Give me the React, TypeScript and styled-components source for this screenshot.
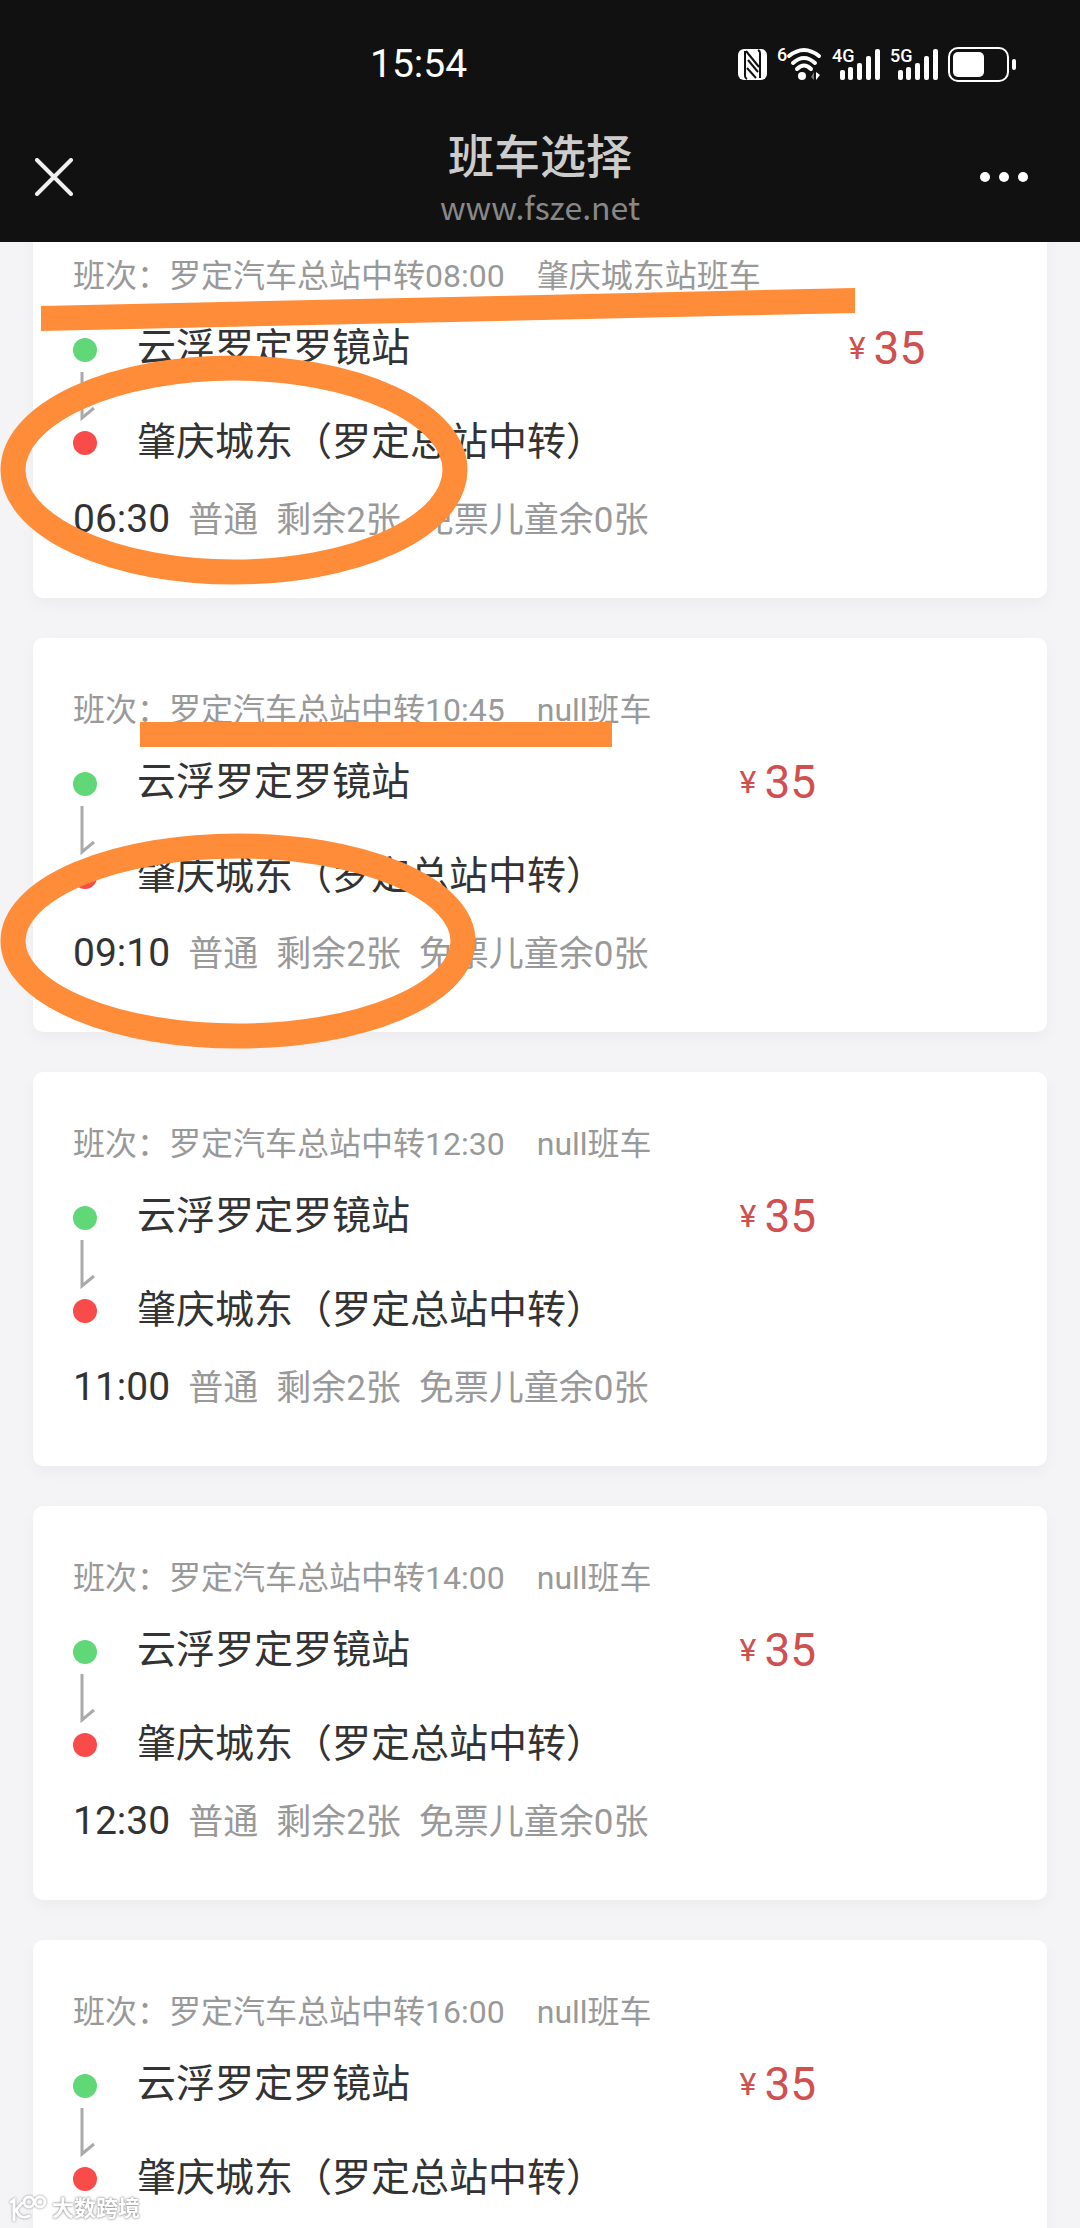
import React from "react";
import styled, { createGlobalStyle } from "styled-components";

const GlobalStyle = createGlobalStyle`
  * { box-sizing: border-box; }
  body {
    margin: 0;
    background: #f4f3f6;
    font-family: Roboto, "Noto Sans CJK SC", sans-serif;
    color: #333;
  }
`;

const Page = styled.div`
  display: flex;
  flex-direction: column;
  height: 100vh;
  overflow: hidden;
`;

const Header = styled.header`
  flex: none;
  background: #111;
  color: #fff;
`;

const StatusBar = styled.div`
  display: flex;
  align-items: center;
  justify-content: space-between;
  height: 128px;
  padding: 0 64px 0 370px;
`;

const Clock = styled.time`
  font-size: 39px;
  line-height: 48px;
`;

const StatusIcons = styled.div`
  display: flex;
  align-items: center;
  gap: 10px;

  svg {
    display: block;
    overflow: visible;
    fill: #fff;
  }

  text {
    font-family: Roboto, sans-serif;
    font-size: 18px;
    font-weight: 500;
  }
`;

const NavBar = styled.div`
  display: grid;
  grid-template-columns: 1fr auto 1fr;
  height: 114px;
  padding: 0 32px;
`;

const IconButton = styled.button<{ $end?: boolean }>`
  display: flex;
  align-items: center;
  justify-content: center;
  justify-self: ${(p) => (p.$end ? "end" : "start")};
  width: ${(p) => (p.$end ? "88px" : "44px")};
  height: 98px;
  padding: 0;
  border: 0;
  background: none;
  color: #f0f0f0;
`;

const Titles = styled.div`
  text-align: center;
`;

const Title = styled.h1`
  margin: 0;
  font-family: "Noto Sans CJK SC", sans-serif;
  font-size: 46px;
  line-height: 50px;
  font-weight: 500;
  color: #ccc;
`;

const Address = styled.p`
  margin: 0;
  font-family: "Noto Sans CJK SC", sans-serif;
  font-size: 32px;
  line-height: 56px;
  color: #888;
`;

const Viewport = styled.main`
  flex: 1;
  min-height: 0;
  overflow: hidden;
`;

/* The list is scrolled a little way under the header. */
const TripList = styled.ul`
  display: flex;
  flex-direction: column;
  gap: 40px;
  margin: -38px 33px 0;
  padding: 0;
  list-style: none;
`;

const Card = styled.li`
  position: relative;
  padding: 49px 40px 48px;
  border-radius: 10px;
  background: #fff;
  box-shadow: 0 6px 16px rgba(0, 0, 0, 0.035);
`;

const Summary = styled.div`
  display: grid;
  grid-template-columns: max-content max-content;
  column-gap: 88px;
  row-gap: 20px;
`;

const ShiftName = styled.h2`
  grid-column: 1;
  display: flex;
  gap: 32px;
  margin: 0;
  font-size: 32px;
  line-height: 46px;
  font-weight: 400;
  color: #999;
`;

const Route = styled.div`
  grid-column: 1;
  display: flex;
  gap: 40px;
`;

const Rail = styled.div`
  display: flex;
  flex-direction: column;
  align-items: center;
  gap: 10px;
  width: 24px;
  padding-top: 19px;
`;

const Dot = styled.span<{ $color: string }>`
  width: 24px;
  height: 24px;
  border-radius: 50%;
  background: ${(p) => p.$color};
`;

const Stations = styled.div`
  display: flex;
  flex-direction: column;
  gap: 36px;
`;

const Station = styled.span`
  font-size: 39px;
  line-height: 58px;
`;

const Price = styled.div`
  grid-column: 2;
  display: flex;
  align-items: center;
  align-self: start;
  gap: 8px;
  font-size: 46px;
  line-height: 58px;
  color: #d05050;
`;

const Currency = styled.span`
  font-size: 32px;
`;

const Details = styled.div`
  display: flex;
  align-items: baseline;
  gap: 18px;
  margin-top: 19px;
  font-size: 35px;
  line-height: 58px;
  color: #999;
`;

const Departure = styled.time`
  font-size: 39px;
  color: #333;
`;

const MarkLayer = styled.svg`
  position: absolute;
  top: 0;
  left: -33px;
  z-index: 1;
  overflow: visible;
  pointer-events: none;
`;

const Watermark = styled.div`
  position: fixed;
  left: 8px;
  bottom: 3px;
  z-index: 2;
  display: flex;
  align-items: center;
  gap: 4px;
  font-size: 22px;
  line-height: 32px;
  font-weight: 700;
  color: #fff;
  text-shadow: 0 0 2px #888, 0 0 3px #aaa;

  svg {
    overflow: visible;
    filter: drop-shadow(0 0 1px #888);
  }
`;

const MARK = "#ff8c38";

type Trip = {
  transfer: string;
  line: string;
  departs: string;
  marks?: React.ReactNode;
};

const trips: Trip[] = [
  {
    transfer: "08:00",
    line: "肇庆城东站",
    departs: "06:30",
    marks: (
      <>
        <path d="M41 102 L855 84 V109 L41 127 Z" fill={MARK} />
        <ellipse cx="234" cy="266" rx="221" ry="102" fill="none" stroke={MARK} strokeWidth="25" />
      </>
    ),
  },
  {
    transfer: "10:45",
    line: "null",
    departs: "09:10",
    marks: (
      <>
        <rect x="140" y="84" width="472" height="25" fill={MARK} />
        <ellipse cx="238" cy="303" rx="225" ry="95" fill="none" stroke={MARK} strokeWidth="25" />
      </>
    ),
  },
  { transfer: "12:30", line: "null", departs: "11:00" },
  { transfer: "14:00", line: "null", departs: "12:30" },
  { transfer: "16:00", line: "null", departs: "14:00" },
];

function Nfc() {
  return (
    <svg width="29" height="31" viewBox="0 0 29 31" aria-label="NFC">
      <rect width="29" height="31" rx="6" />
      <g fill="none" stroke="#111" strokeWidth="2">
        <path d="M7 2 V27 Q7 29 9 30 M22 29 V4 Q22 2 20 1" />
        <path d="M8 2 L21 18 M10 11 L20 23 M9 19 L18 29" />
      </g>
    </svg>
  );
}

function Wifi() {
  return (
    <svg width="45" height="34" viewBox="0 0 45 34" aria-label="Wi-Fi 6">
      <text x="0" y="14">6</text>
      <g fill="none" stroke="#fff" strokeWidth="4" strokeLinecap="round">
        <path d="M12 9 Q27 -3 42 9" />
        <path d="M16 16 Q27 6 38 16" />
        <path d="M20 22 Q27 15 34 22" />
      </g>
      <circle cx="25" cy="29" r="4" />
      <path d="M37 25 V33 L34 30 Z" fill="#777" />
      <path d="M39 25 V33 L43 28 Z" />
    </svg>
  );
}

function Signal({ label }: { label: string }) {
  return (
    <svg width="48" height="34" viewBox="0 0 48 34" aria-label={label + " signal"}>
      <text x="0" y="15">{label}</text>
      <rect x="8" y="23" width="5" height="10" rx="2" />
      <rect x="16" y="20" width="5" height="13" rx="2" />
      <rect x="25" y="16" width="5" height="17" rx="2" />
      <rect x="34" y="9" width="5" height="24" rx="2" />
      <rect x="43" y="2" width="5" height="31" rx="2" />
    </svg>
  );
}

function Battery() {
  return (
    <svg width="68" height="35" viewBox="0 0 68 35" aria-label="Battery">
      <rect x="1" y="1" width="59" height="33" rx="9" fill="none" stroke="#fff" strokeWidth="2" />
      <rect x="5" y="5" width="31" height="25" rx="5" />
      <rect x="64" y="12" width="4" height="11" rx="2" />
    </svg>
  );
}

function TripCard({ trip }: { trip: Trip }) {
  return (
    <Card>
      <Summary>
        <ShiftName>
          <span>班次：罗定汽车总站中转{trip.transfer}</span>
          <span>{trip.line}班车</span>
        </ShiftName>
        <Route>
          <Rail>
            <Dot $color="#60d878" />
            <svg width="20" height="49" viewBox="0 0 20 49" fill="none" stroke="#aaa" strokeWidth="3">
              <path d="M7 0 V46 L19 36" />
            </svg>
            <Dot $color="#fa4b4b" />
          </Rail>
          <Stations>
            <Station>云浮罗定罗镜站</Station>
            <Station>肇庆城东（罗定总站中转）</Station>
          </Stations>
        </Route>
        <Price>
          <Currency>¥</Currency>35
        </Price>
      </Summary>
      <Details>
        <Departure>{trip.departs}</Departure>
        <span>普通</span>
        <span>剩余2张</span>
        <span>免票儿童余0张</span>
      </Details>
      {trip.marks && (
        <MarkLayer width="880" height="420" viewBox="0 0 880 420" aria-hidden="true">
          {trip.marks}
        </MarkLayer>
      )}
    </Card>
  );
}

export default function App() {
  return (
    <Page>
      <GlobalStyle />
      <Header>
        <StatusBar>
          <Clock>15:54</Clock>
          <StatusIcons>
            <Nfc />
            <Wifi />
            <Signal label="4G" />
            <Signal label="5G" />
            <Battery />
          </StatusIcons>
        </StatusBar>
        <NavBar>
          <IconButton aria-label="关闭">
            <svg width="38" height="38" viewBox="0 0 38 38" stroke="currentColor" strokeWidth="4" strokeLinecap="round">
              <path d="M2 2 L36 36 M36 2 L2 36" />
            </svg>
          </IconButton>
          <Titles>
            <Title>班车选择</Title>
            <Address>www.fsze.net</Address>
          </Titles>
          <IconButton $end aria-label="更多">
            <svg width="48" height="10" viewBox="0 0 48 10" fill="#fff">
              <circle cx="5" cy="5" r="5" />
              <circle cx="24" cy="5" r="5" />
              <circle cx="43" cy="5" r="5" />
            </svg>
          </IconButton>
        </NavBar>
      </Header>
      <Viewport>
        <TripList>
          {trips.map((trip) => (
            <TripCard key={trip.departs} trip={trip} />
          ))}
        </TripList>
      </Viewport>
      <Watermark>
        <svg width="40" height="28" viewBox="0 0 40 28" fill="none" stroke="#fff" strokeWidth="3" strokeLinecap="round">
          <path d="M3 7 L6 5 V25" />
          <path d="M14 8 L8 15 Q12 25 21 21" />
          <circle cx="21" cy="7" r="5" />
          <circle cx="32" cy="7" r="5" />
        </svg>
        大数跨境
      </Watermark>
    </Page>
  );
}
